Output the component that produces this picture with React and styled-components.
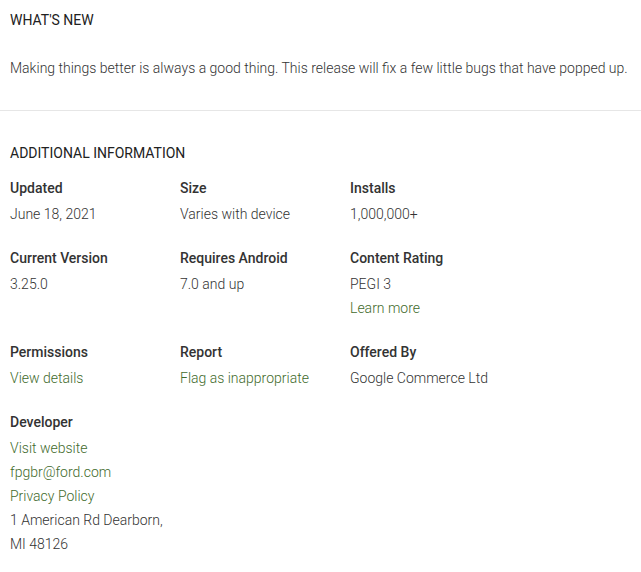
import styled, { createGlobalStyle } from "styled-components";

const GlobalStyle = createGlobalStyle`
  body {
    margin: 0;
    background: #ffffff;
    font-family: Roboto, "Liberation Sans", Arial, sans-serif;
  }
`;

const info = [
  { label: "Updated", lines: [{ text: "June 18, 2021" }] },
  { label: "Size", lines: [{ text: "Varies with device" }] },
  { label: "Installs", lines: [{ text: "1,000,000+" }] },
  { label: "Current Version", lines: [{ text: "3.25.0" }] },
  { label: "Requires Android", lines: [{ text: "7.0 and up" }] },
  {
    label: "Content Rating",
    lines: [{ text: "PEGI 3" }, { text: "Learn more", link: true }],
  },
  { label: "Permissions", lines: [{ text: "View details", link: true }] },
  { label: "Report", lines: [{ text: "Flag as inappropriate", link: true }] },
  { label: "Offered By", lines: [{ text: "Google Commerce Ltd" }] },
  {
    label: "Developer",
    lines: [
      { text: "Visit website", link: true },
      { text: "fpgbr@ford.com", link: true },
      { text: "Privacy Policy", link: true },
      { text: "1 American Rd Dearborn," },
      { text: "MI 48126" },
    ],
  },
];

export default function App() {
  return (
    <Page>
      <GlobalStyle />
      <Section>
        <Heading>What's New</Heading>
        <Paragraph>
          Making things better is always a good thing. This release will fix a
          few little bugs that have popped up.
        </Paragraph>
      </Section>
      <Divider />
      <Section $top={32}>
        <Heading>Additional Information</Heading>
        <Grid>
          {info.map((item) => (
            <Cell key={item.label}>
              <Label>{item.label}</Label>
              {item.lines.map((line) => (
                <Value key={line.text} $link={line.link}>
                  {line.text}
                </Value>
              ))}
            </Cell>
          ))}
        </Grid>
      </Section>
    </Page>
  );
}

const Page = styled.div`
  width: 641px;
  min-height: 572px;
  background: #fff;
`;

const Section = styled.section`
  padding: ${(p) => p.$top || 10}px 10px 0 10px;
`;

const Heading = styled.h2`
  margin: 0;
  font-size: 14px;
  font-weight: 400;
  line-height: 20px;
  color: #212121;
  text-transform: uppercase;
`;

const Paragraph = styled.p`
  margin: 28px 0 0;
  font-size: 14px;
  font-weight: 300;
  line-height: 20px;
  color: #333;
  white-space: nowrap;
`;

const Divider = styled.hr`
  margin: 32px 0 0;
  border: 0;
  border-top: 1px solid #e6e6e6;
`;

const Grid = styled.div`
  display: grid;
  grid-template-columns: repeat(3, 170px);
  row-gap: 20px;
  margin-top: 13px;
`;

const Cell = styled.div`
  display: flex;
  flex-direction: column;
`;

const Label = styled.div`
  font-size: 14px;
  font-weight: 500;
  line-height: 24px;
  color: #333;
  margin-bottom: 2px;
`;

const Value = styled.div`
  font-size: 14px;
  font-weight: 300;
  line-height: 24px;
  color: ${(p) => (p.$link ? "#3f6b2c" : "#333")};
  cursor: ${(p) => (p.$link ? "pointer" : "default")};
`;
